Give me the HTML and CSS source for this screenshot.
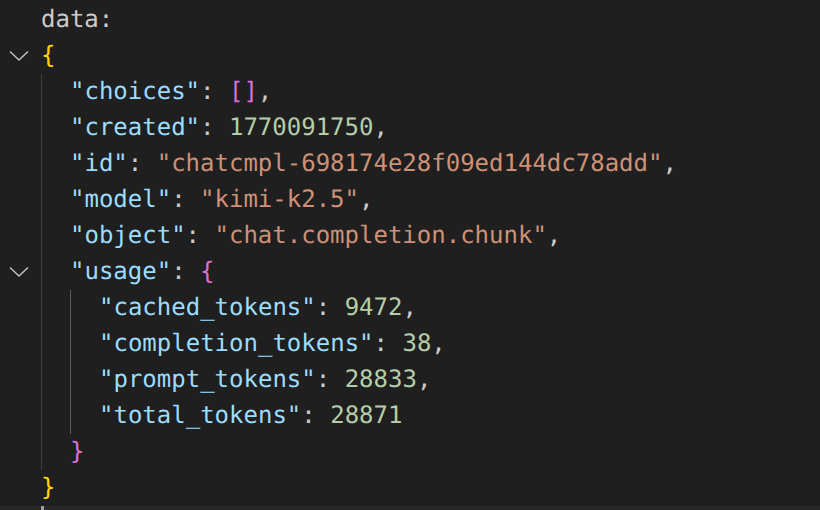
FILE: index.html
```html
<!DOCTYPE html>
<html>
<head>
<meta charset="utf-8">
<link rel="stylesheet" href="styles.css">
</head>
<body>
<div class="editor">
  <div class="gutter">
    <div class="g"></div>
    <div class="g"><svg class="chev" viewBox="0 0 20 12" width="20" height="12"><path d="M1 1.5 L10 10 L19 1.5" fill="none" stroke="#bfbfbf" stroke-width="1.6"/></svg></div>
    <div class="g"></div><div class="g"></div><div class="g"></div><div class="g"></div><div class="g"></div>
    <div class="g"><svg class="chev" viewBox="0 0 20 12" width="20" height="12"><path d="M1 1.5 L10 10 L19 1.5" fill="none" stroke="#bfbfbf" stroke-width="1.6"/></svg></div>
  </div>
  <div class="code">
    <div class="ln plain">data:</div>
    <div class="ln"><span class="b1">{</span></div>
    <div class="block">
      <div class="ln"><span class="k">"choices"</span><span class="p">: </span><span class="b2">[]</span><span class="p">,</span></div>
      <div class="ln"><span class="k">"created"</span><span class="p">: </span><span class="n">1770091750</span><span class="p">,</span></div>
      <div class="ln"><span class="k">"id"</span><span class="p">: </span><span class="s">"chatcmpl-698174e28f09ed144dc78add"</span><span class="p">,</span></div>
      <div class="ln"><span class="k">"model"</span><span class="p">: </span><span class="s">"kimi-k2.5"</span><span class="p">,</span></div>
      <div class="ln"><span class="k">"object"</span><span class="p">: </span><span class="s">"chat.completion.chunk"</span><span class="p">,</span></div>
      <div class="ln"><span class="k">"usage"</span><span class="p">: </span><span class="b2">{</span></div>
      <div class="block">
        <div class="ln"><span class="k">"cached_tokens"</span><span class="p">: </span><span class="n">9472</span><span class="p">,</span></div>
        <div class="ln"><span class="k">"completion_tokens"</span><span class="p">: </span><span class="n">38</span><span class="p">,</span></div>
        <div class="ln"><span class="k">"prompt_tokens"</span><span class="p">: </span><span class="n">28833</span><span class="p">,</span></div>
        <div class="ln"><span class="k">"total_tokens"</span><span class="p">: </span><span class="n">28871</span></div>
      </div>
      <div class="ln"><span class="b2">}</span></div>
    </div>
    <div class="ln"><span class="b1">}</span></div>
  </div>
</div>
<div class="hscroll"><div class="thumb"></div></div>
</body>
</html>
```
FILE: styles.css
```css
html, body {
  margin: 0;
  padding: 0;
  background: #1f1f1f;
  width: 820px;
  height: 510px;
  overflow: hidden;
}
.editor {
  display: flex;
  padding-top: 2px;
  height: 504px;
  font-family: "DejaVu Sans Mono", monospace;
  font-size: 24px;
}
.gutter {
  width: 41px;
  flex: none;
}
.g {
  height: 36px;
  display: flex;
  align-items: center;
  justify-content: flex-start;
  padding-left: 9px;
}
.chev { display: block; }
.code {
  flex: 1;
  color: #cccccc;
}
.ln {
  height: 36px;
  line-height: 35px;
  white-space: pre;
  text-rendering: geometricPrecision;
}
.block {
  border-left: 1px solid #404040;
  padding-left: 28px;
}
.block .block {
  border-left-color: #5a5a5a;
}
.plain { color: #cccccc; }
.k { color: #9cdcfe; }
.s { color: #ce9178; }
.n { color: #b5cea8; }
.p { color: #cccccc; }
.b1 { color: #ffd700; }
.b2 { color: #da70d6; }
.hscroll {
  height: 4px;
  background: #272727;
  padding-left: 41px;
}
.thumb {
  width: 3px;
  height: 4px;
  background: #a0a0a0;
}
```
